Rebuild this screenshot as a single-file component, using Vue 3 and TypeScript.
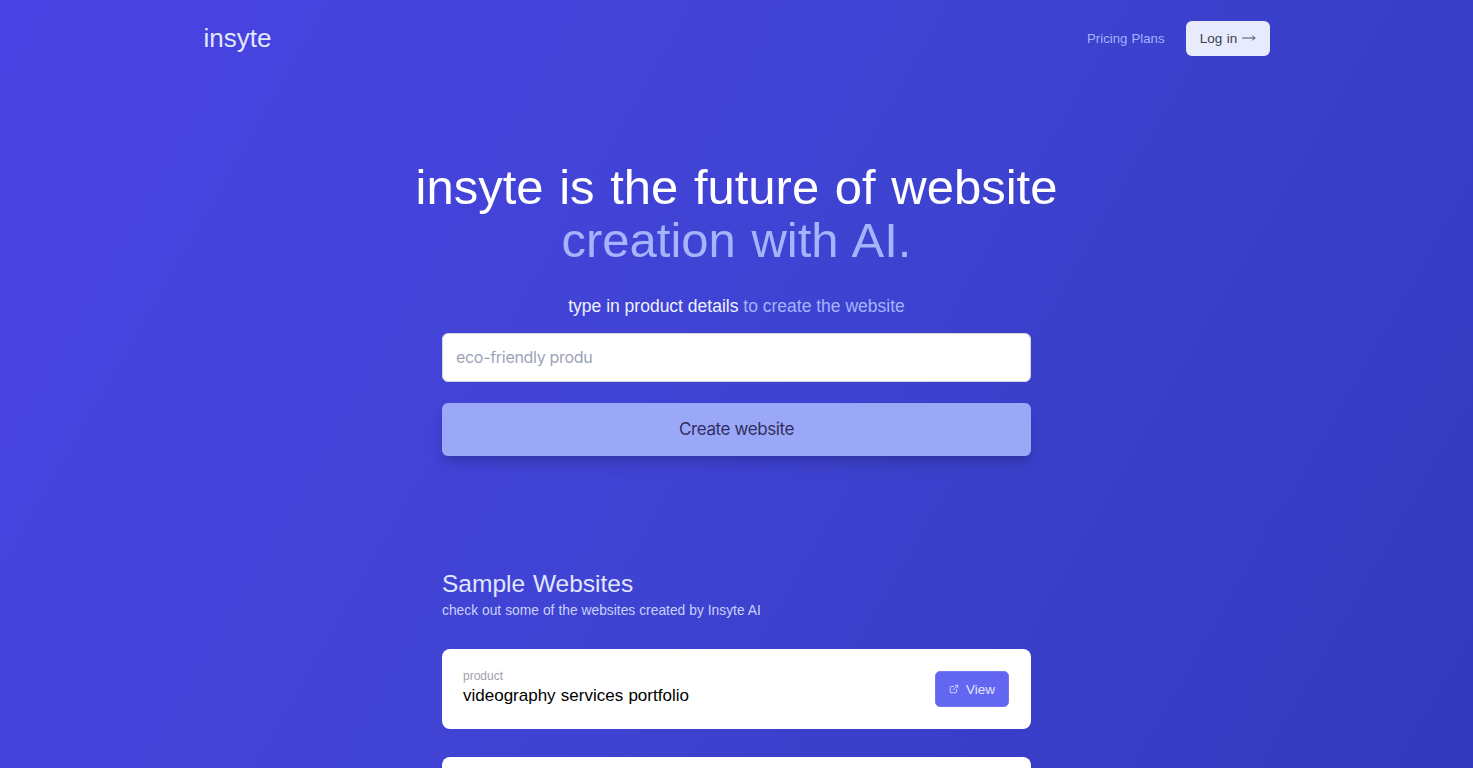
<script setup lang="ts">
const sample = { label: 'product', title: 'videography services portfolio' }
</script>

<template>
  <div class="page">
    <header class="nav">
      <a class="logo">insyte</a>
      <div class="nav-right">
        <a class="pricing">Pricing Plans</a>
        <button class="login">
          Log in
          <svg class="arrow" width="14" height="8" viewBox="0 0 14 8" fill="none" stroke="currentColor" stroke-width="1" stroke-linecap="round" stroke-linejoin="round">
            <path d="M0.5 4H13" />
            <path d="M10.5 2 13 4l-2.5 2" />
          </svg>
        </button>
      </div>
    </header>
    <main class="main">
      <h1 class="hero"><span>insyte is the future of website</span> <span class="soft">creation with AI.</span></h1>
      <p class="lead"><span class="white">type in product details</span> to create the website</p>
      <div class="form">
        <input class="field" type="text" placeholder="eco-friendly produ" />
        <button class="create">Create website</button>
      </div>
      <section class="samples">
        <h2 class="s-title">Sample Websites</h2>
        <p class="s-sub">check out some of the websites created by Insyte AI</p>
        <div class="list">
          <article class="card">
            <div class="c-text">
              <div class="c-label">{{ sample.label }}</div>
              <div class="c-title">{{ sample.title }}</div>
            </div>
            <button class="view">
              <svg width="10" height="10" viewBox="0 0 24 24" fill="none" stroke="currentColor" stroke-width="2" stroke-linecap="round" stroke-linejoin="round">
                <path d="M18 13v6a2 2 0 0 1-2 2H5a2 2 0 0 1-2-2V8a2 2 0 0 1 2-2h6" />
                <path d="M15 3h6v6" />
                <path d="M10 14 21 3" />
              </svg>
              View
            </button>
          </article>
          <article class="card"></article>
        </div>
      </section>
    </main>
  </div>
</template>

<style>
html, body { margin: 0; height: 100%; overflow: hidden; }
</style>

<style scoped>
.page {
  height: 768px;
  overflow: hidden;
  background: linear-gradient(120deg, #4a43e4 0%, #3f43d2 50%, #3239bd 100%);
  font-family: "Liberation Sans", Arial, sans-serif;
  color: #fff;
}
.nav {
  width: 1066px;
  margin: 0 auto;
  height: 77px;
  display: flex;
  align-items: center;
  justify-content: space-between;
}
.logo { font-size: 26px; color: #e0e7ff; }
.nav-right { display: flex; align-items: center; gap: 21px; }
.pricing { font-size: 13.2px; word-spacing: 0.5px; color: #a5b4fc; padding-bottom: 1px; }
.login {
  box-sizing: border-box;
  width: 84px;
  height: 35px;
  border: none;
  border-radius: 6px;
  background: #e8ebfb;
  color: #374151;
  font: 13.5px "Liberation Sans", Arial, sans-serif;
  word-spacing: 0.6px;
  padding: 0 0 1px 1px;
  display: flex;
  align-items: center;
  justify-content: center;
  gap: 5px;
}
.arrow { color: #4b5563; }
.main { width: 589px; margin: 0 auto; }
.hero {
  margin: 84px -60px 0;
  font-size: 49px;
  line-height: 53px;
  font-weight: 400;
  text-align: center;
  word-spacing: 2px;
}
.hero span { display: block; }
.soft { color: #a5b4fc; }
.lead {
  margin: 26px 0 0;
  height: 26px;
  line-height: 26px;
  text-align: center;
  font-size: 17.5px;
  color: #a5b4fc;
}
.white { color: #eef2ff; }
.form { margin-top: 14px; display: flex; flex-direction: column; gap: 21px; }
.field {
  box-sizing: border-box;
  width: 100%;
  height: 49px;
  padding: 0 13px 2px;
  border: 1px solid #d1d5db;
  border-radius: 6px;
  background: #fff;
  font: 16px Inter, sans-serif;
  letter-spacing: -0.3px;
  outline: none;
}
.field::placeholder { color: #9ca3b8; opacity: 1; }
.create {
  height: 53px;
  border: none;
  border-radius: 6px;
  background: #9ba8f8;
  color: #312e61;
  font: 17px Inter, sans-serif;
  letter-spacing: -0.4px;
  padding: 0 0 2px;
  box-shadow: 0 10px 15px -3px rgba(0,0,0,.15), 0 4px 6px -2px rgba(0,0,0,.1);
}
.samples { margin-top: 112px; }
.s-title {
  margin: 0;
  font-size: 24.5px;
  line-height: 32px;
  font-weight: 400;
  word-spacing: 1px;
  color: #e0e7ff;
}
.s-sub { margin: 1px 0 0; font-size: 13.8px; line-height: 20px; word-spacing: 0.15px; color: #c7d2fe; }
.list { margin-top: 28px; display: flex; flex-direction: column; gap: 28px; }
.card {
  box-sizing: border-box;
  height: 80px;
  padding: 0 22px 0 21px;
  background: #fff;
  border-radius: 8px;
  display: flex;
  align-items: center;
  justify-content: space-between;
  flex-shrink: 0;
}
.c-text { margin-bottom: 3px; }
.c-label { font-size: 12px; line-height: 16px; margin-bottom: 1px; color: #a1a1aa; }
.c-title { font-size: 17px; word-spacing: 0.5px; line-height: 22px; color: #000; }
.view {
  box-sizing: border-box;
  width: 74px;
  height: 36px;
  display: flex;
  align-items: center;
  justify-content: center;
  gap: 7px;
  border: 1px solid #7377f3;
  border-radius: 5px;
  background: #6366f1;
  color: #e0e7ff;
  font: 13.5px "Liberation Sans", Arial, sans-serif;
  padding: 0;
}
</style>
